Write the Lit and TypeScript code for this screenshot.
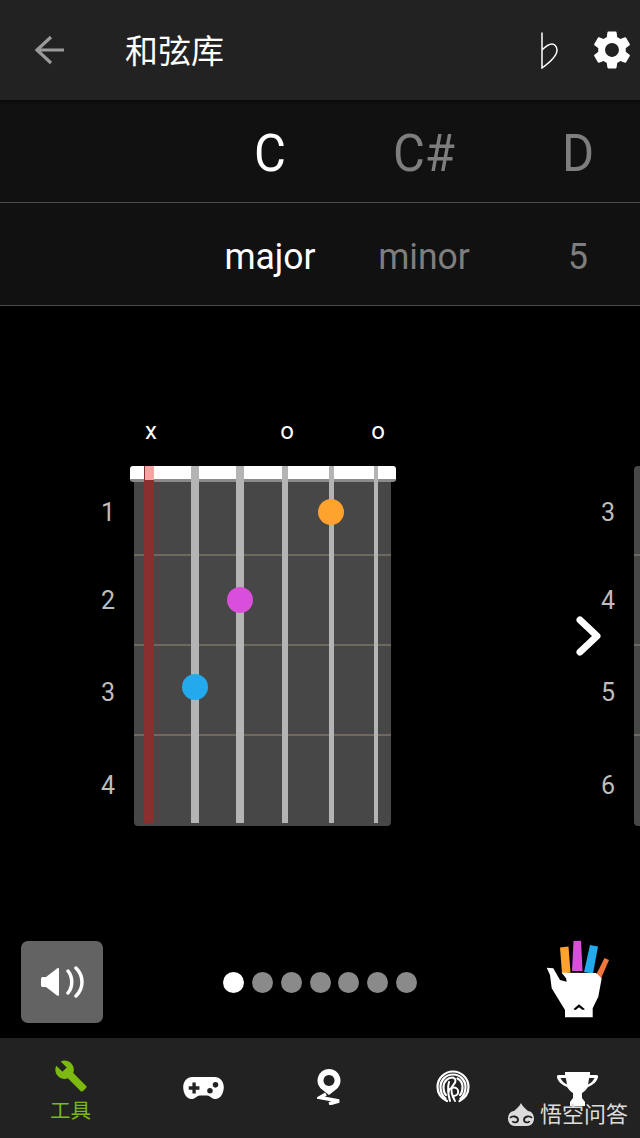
import { LitElement, html, css, svg } from 'lit';
import { customElement, property } from 'lit/decorators.js';

interface Finger {
  string: number;
  y: number;
  color: string;
}

// centre of each string, measured from the left edge of the neck
const STRINGS = [
  { x: 15, w: 9.5, color: '#8a2f2f' },
  { x: 61, w: 8, color: '#b4b4b4' },
  { x: 106, w: 7.5, color: '#b4b4b4' },
  { x: 151, w: 6.5, color: '#b4b4b4' },
  { x: 197, w: 5, color: '#b4b4b4' },
  { x: 242, w: 4, color: '#b4b4b4' },
];

@customElement('chord-board')
export class ChordBoard extends LitElement {
  static styles = css`
    :host {
      display: flex;
      flex: none;
      padding-top: 46px;
    }
    .frets {
      width: 44px;
      display: grid;
      grid-template-rows: 92px 84px 100px 86px;
      align-items: center;
      color: #bdbdbd;
      font-size: 25px;
      box-sizing: border-box;
      padding-right: 19px;
      text-align: right;
      height: 360px;
    }
    .neck {
      position: relative;
      width: 257px;
      height: 360px;
      background: #474747;
      border-radius: 4px;
      display: grid;
      grid-template-rows: repeat(4, 90px);
    }
    .cell {
      border-bottom: 2px solid #6e6a60;
      box-sizing: border-box;
    }
    .cell:nth-child(4) {
      border-bottom: none;
    }
    .nut {
      position: absolute;
      left: -4px;
      right: -5px;
      top: 0;
      height: 13px;
      background: #fff;
      border-bottom: 3px solid #8a8a8a;
      border-radius: 3px;
    }
    .string {
      position: absolute;
      top: 0;
      bottom: 3px;
    }
    .mute-cap {
      position: absolute;
      top: 0;
      left: 10.5px;
      width: 9.5px;
      height: 14px;
      background: #f7a3a3;
    }
    .dot {
      position: absolute;
      width: 26px;
      height: 26px;
      border-radius: 50%;
      transform: translate(-50%, -50%);
    }
    .marks {
      position: absolute;
      top: -50px;
      left: 0;
      right: 0;
      height: 30px;
      color: #fff;
      font-size: 24px;
      line-height: 30px;
    }
    .marks span {
      position: absolute;
      transform: translateX(-50%);
    }
  `;

  @property({ type: Array }) frets: number[] = [];
  @property({ type: Array }) fingers: Finger[] = [];
  @property({ type: Array }) marks: { x: number; label: string }[] = [];
  @property({ type: Boolean }) active = false;

  render() {
    return html`
      <div class="frets">${this.frets.map((n) => html`<div>${n}</div>`)}</div>
      <div class="neck">
        <div class="cell"></div>
        <div class="cell"></div>
        <div class="cell"></div>
        <div class="cell"></div>
        ${this.active ? html`<div class="nut"></div>` : ''}
        ${STRINGS.map(
          (s) => html`<div
            class="string"
            style="left:${s.x - s.w / 2}px;width:${s.w}px;background:${s.color}"
          ></div>`
        )}
        ${this.active ? html`<div class="mute-cap"></div>` : ''}
        <div class="marks">
          ${this.marks.map((m) => html`<span style="left:${m.x}px">${m.label}</span>`)}
        </div>
        ${this.fingers.map(
          (f) => html`<div
            class="dot"
            style="left:${STRINGS[f.string].x}px;top:${f.y}px;background:${f.color}"
          ></div>`
        )}
      </div>
    `;
  }
}

const gear = svg`<path fill="#fff" d="M19.14 12.94c.04-.3.06-.61.06-.94 0-.32-.02-.64-.07-.94l2.03-1.58a.49.49 0 0 0 .12-.61l-1.92-3.32a.488.488 0 0 0-.59-.22l-2.39.96c-.5-.38-1.03-.7-1.62-.94l-.36-2.54a.484.484 0 0 0-.48-.41h-3.84c-.24 0-.43.17-.47.41l-.36 2.54c-.59.24-1.13.57-1.62.94l-2.39-.96c-.22-.08-.47 0-.59.22L2.74 8.87c-.12.21-.08.47.12.61l2.03 1.58c-.05.3-.09.63-.09.94s.02.64.07.94l-2.03 1.58a.49.49 0 0 0-.12.61l1.92 3.32c.12.22.37.29.59.22l2.39-.96c.5.38 1.03.7 1.62.94l.36 2.54c.05.24.24.41.48.41h3.84c.24 0 .44-.17.47-.41l.36-2.54c.59-.24 1.13-.56 1.62-.94l2.39.96c.22.08.47 0 .59-.22l1.92-3.32c.12-.22.07-.47-.12-.61l-2.01-1.58zM12 15.6c-1.98 0-3.6-1.62-3.6-3.6s1.62-3.6 3.6-3.6 3.6 1.62 3.6 3.6-1.62 3.6-3.6 3.6z"/>`;

@customElement('app-root')
export class AppRoot extends LitElement {
  static styles = css`
    :host {
      display: block;
      width: 640px;
      height: 1138px;
      background: #000;
      overflow: hidden;
      font-family: Roboto, "Noto Sans CJK SC", sans-serif;
    }
    .page {
      height: 100%;
      display: flex;
      flex-direction: column;
    }
    header {
      flex: none;
      height: 100px;
      background: #222;
      display: flex;
      align-items: center;
      padding: 0 5px 0 34px;
      box-sizing: border-box;
      box-shadow: 0 2px 3px rgba(0, 0, 0, 0.5);
      position: relative;
    }
    header .title {
      margin: 0 0 2px 60px;
      color: #fff;
      font-size: 33px;
      flex: 1;
    }
    header .flat {
      margin-right: 29px;
    }
    .picker {
      flex: none;
      height: 103px;
      background: #111;
      border-bottom: 1px solid #4a4a4a;
      box-sizing: border-box;
      display: flex;
      align-items: center;
      padding-left: 193px;
      overflow: hidden;
    }
    .picker div {
      flex: none;
      width: 154px;
      text-align: center;
      color: #7e7e7e;
    }
    .picker div.on {
      color: #fff;
    }
    .roots {
      padding-top: 5px;
    }
    .roots div {
      font-size: 49px;
      transform: scaleY(1.06);
    }
    .kinds {
      padding-top: 4px;
    }
    .kinds div {
      font-size: 35.5px;
      transform: scaleY(1.05);
    }
    main {
      flex: 1;
      position: relative;
      overflow: hidden;
      min-height: 0;
      display: flex;
      flex-direction: column;
    }
    .boards {
      display: flex;
      gap: 199px;
      padding: 114px 0 0 90px;
    }
    .next {
      position: absolute;
      left: 574px;
      top: 309px;
    }
    .controls {
      margin-top: auto;
      padding: 0 0 15px 21px;
      display: flex;
      align-items: center;
    }
    .sound {
      flex: none;
      width: 82px;
      height: 82px;
      border-radius: 7px;
      background: #636363;
      display: flex;
      align-items: center;
      justify-content: center;
    }
    .pager {
      margin-left: 120px;
      display: flex;
      gap: 7.85px;
    }
    .pager i {
      width: 21px;
      height: 21px;
      border-radius: 50%;
      background: #8a8a8a;
    }
    .pager i.on {
      background: #fff;
    }
    .hand {
      flex: none;
      margin-left: 128px;
      align-self: flex-start;
      margin-top: -1px;
    }
    nav {
      flex: none;
      height: 100px;
      background: #222;
      display: grid;
      grid-template-columns: 141px 125px 125px 124px 125px;
      position: relative;
    }
    nav .tab {
      display: flex;
      flex-direction: column;
      align-items: center;
      padding-top: 23px;
      color: #7cba12;
      font-size: 20.5px;
      line-height: 26px;
      box-sizing: border-box;
    }
    .tab span {
      margin-top: 5px;
    }
    .wrench {
      margin-top: -2px;
    }
    .pad {
      margin-top: 15px;
    }
    .pin {
      margin-top: 8px;
    }
    .print {
      margin-top: 9px;
    }
    .cup {
      margin-top: 11px;
    }
    .watermark {
      position: absolute;
      right: 12px;
      bottom: 11px;
      display: flex;
      align-items: center;
      gap: 6px;
      color: #dcdcdc;
      font-size: 22px;
      line-height: 24px;
    }
  `;

  render() {
    return html`
      <div class="page">
        <header>
          <svg width="31" height="30" viewBox="0 0 31 30" fill="none" stroke="#9a9a9a" stroke-width="3.2">
            <path d="M3 15h27M17 2 3 15l14 13" />
          </svg>
          <div class="title">和弦库</div>
          <svg class="flat" width="20" height="38" viewBox="0 0 20 38" fill="none" stroke="#fff" stroke-width="1.5">
            <path d="M2 1.500V37c7-5 15-12 15-18 0-4-3-6-5-6s-6 2-10 6" />
          </svg>
          <svg width="46" height="46" viewBox="0 0 24 24">${gear}</svg>
        </header>
        <div class="picker roots">
          <div class="on">C</div>
          <div>C#</div>
          <div>D</div>
        </div>
        <div class="picker kinds">
          <div class="on">major</div>
          <div>minor</div>
          <div>5</div>
        </div>
        <main>
          <div class="boards">
            <chord-board
              active
              .frets=${[1, 2, 3, 4]}
              .marks=${[
                { x: 17, label: 'x' },
                { x: 153, label: 'o' },
                { x: 244, label: 'o' },
              ]}
              .fingers=${[
                { string: 4, y: 46, color: '#ffa22e' },
                { string: 2, y: 134, color: '#d94fdc' },
                { string: 1, y: 221, color: '#22aaec' },
              ]}
            ></chord-board>
            <chord-board .frets=${[3, 4, 5, 6]}></chord-board>
          </div>
          <svg class="next" width="30" height="42" viewBox="0 0 30 42" fill="none" stroke="#fff" stroke-width="7" stroke-linecap="round" stroke-linejoin="round">
            <path d="M6 5l17 16L6 37" />
          </svg>
          <div class="controls">
            <div class="sound">
              <svg width="44" height="32" viewBox="0 0 44 32" fill="none">
                <path fill="#fff" d="M1 13c0-1 .5-2 1.500-2H6L17 2.500c1-.8 2-.5 2 1v25c0 1.500-1 1.800-2 1L6 21H2.500C1.500 21 1 20 1 19z" />
                <path stroke="#fff" stroke-width="3.500" stroke-linecap="round" d="M28 5c5 6 5 16 0 22M36 2c8 8 8 20 0 28" />
              </svg>
            </div>
            <div class="pager">
              <i class="on"></i><i></i><i></i><i></i><i></i><i></i><i></i>
            </div>
            <svg class="hand" width="66" height="80" viewBox="0 0 66 80">
              <path fill="#ffa22e" d="M15 7.500l8.500-1 2 26-8.500 1z" />
              <path fill="#d94fdc" d="M28.500 1l7.500-.3L37.500 31h-10.500z" />
              <path fill="#22aaec" d="M45 5l8 1.500-5 27-9-1.500z" />
              <path fill="#f0763c" d="M59.500 18l4.500 2-8 18.500-5-3.500z" />
              <path fill="#fff" fill-rule="evenodd" d="M1.700 27.700l6.600.6L15 40l6.700 1.700-.7-3.400-4.300-5.600 34.300.3 5.700 5.300-3.400 18.400-5.600 11.600v9H20V70L6.700 48.300 5 35zM28.300 69.300l5.700-5 6 5-2.300.7-3.700-2.700-3.300 2.700z" />
            </svg>
          </div>
        </main>
        <nav>
          <div class="tab">
            <svg class="wrench" width="34" height="34" viewBox="0 0 24 24">
              <path fill="#7cba12" d="M22.700 19l-9.100-9.100c.9-2.300.4-5-1.500-6.900-2-2-5-2.400-7.400-1.300L9 6 6 9 1.600 4.700C.4 7.100.9 10.100 2.900 12.100c1.900 1.900 4.600 2.400 6.900 1.500l9.100 9.100c.4.400 1 .4 1.400 0l2.300-2.300c.5-.4.5-1.100.1-1.400z" />
            </svg>
            <span>工具</span>
          </div>
          <div class="tab">
            <svg class="pad" width="41" height="24" viewBox="0 0 44 26">
              <path fill="#fff" fill-rule="evenodd" d="M10 1h24c6 0 10 5 10 11 0 7-4 13-9 13-4 0-6-4-9-4H18c-3 0-5 4-9 4-5 0-9-6-9-13C0 6 4 1 10 1zM10 7v4.200H6v3.600h4V19h3.600v-4.200h4v-3.600h-4V7zM38 9.600a3 3 0 1 0-6 0 3 3 0 1 0 6 0zM32 16a3 3 0 1 0-6 0 3 3 0 1 0 6 0z" />
            </svg>
          </div>
          <div class="tab">
            <svg class="pin" width="24" height="36" viewBox="0 0 24 36">
              <path fill="#fff" fill-rule="evenodd" d="M12 0a11.500 11.500 0 0 1 6 21.300L12 26l-6-4.700A11.500 11.500 0 0 1 12 0zm0 6a5.500 5.500 0 1 0 .01 0z" />
              <path fill="none" stroke="#fff" stroke-width="3.400" d="M9 25 3 28.500l19 3.500-10 3" />
            </svg>
          </div>
          <div class="tab">
            <svg class="print" width="34" height="34" viewBox="0 0 34 34" fill="none" stroke="#fff" stroke-width="2.200" stroke-linecap="round">
              <path d="M11 31C5 28 1.500 23 1.500 17 1.500 8.500 8.500 1.500 17 1.500S32.500 8.500 32.500 17c0 6-3.500 11-9 14" />
              <path d="M9.500 28.500C6 26 4.500 21.500 4.500 17 4.500 10 10 4.500 17 4.500S29.500 10 29.500 17c0 4.500-2 9-5 11.500" />
              <path d="M10 25c-2-2-2.500-5-2.500-8 0-5.500 4-9.500 9.500-9.500" />
              <path d="M24 25c2-2 2.500-5 2.500-8 0-4-2-7-5-8.500" />
              <path stroke-width="2" d="M14 31c-2-7-3-12-1-19M19 31c-.8-1-1.600-3-1.600-5 2.600 0 4.800-1.800 4.800-4.300s-2-4.200-4.500-4.200-5 1.800-5 4.600" />
              <path stroke-width="2" d="M17 27c-2.500-6-2-10 1-13 2-2 2-5.500-.5-6" />
            </svg>
          </div>
          <div class="tab">
            <svg class="cup" width="41" height="34" viewBox="0 0 41 34">
              <path fill="#fff" fill-rule="evenodd" d="M8 0h25v3h6c2 0 2.500 1 2 2.500-1 3.500-4 7-10 9.500-2 3-4 5-6 6v5l3 4v4H13v-4l3-4v-5c-2-1-4-3-6-6C4 12.500 1 9 0 5.500-.5 4 0 3 2 3h6zM3.500 6c1 2.500 3.500 5 6.500 6.500L8.800 6zm34 0h-5.300L31 12.500c3-1.500 5.500-4 6.500-6.500z" />
            </svg>
          </div>
          <div class="watermark">
            <svg width="26" height="24" viewBox="0 0 26 24">
              <path fill="#dcdcdc" d="M13 0c1 3 4 5 7 8 3 0 6 3 6 7.500 0 4.500-3 7.500-7 7.500H7c-4 0-7-3-7-7.500C0 11 3 8 6 8c3-3 6-5 7-8z" />
              <path fill="none" stroke="#222" stroke-width="1.800" d="M2 15c2-2.500 7.500-2 8 1.500.3 3-4.500 4-5.500 1.500M24 15c-2-2.500-7.500-2-8 1.500-.3 3 4.500 4 5.500 1.500" />
            </svg>
            <span>悟空问答</span>
          </div>
        </nav>
      </div>
    `;
  }
}
